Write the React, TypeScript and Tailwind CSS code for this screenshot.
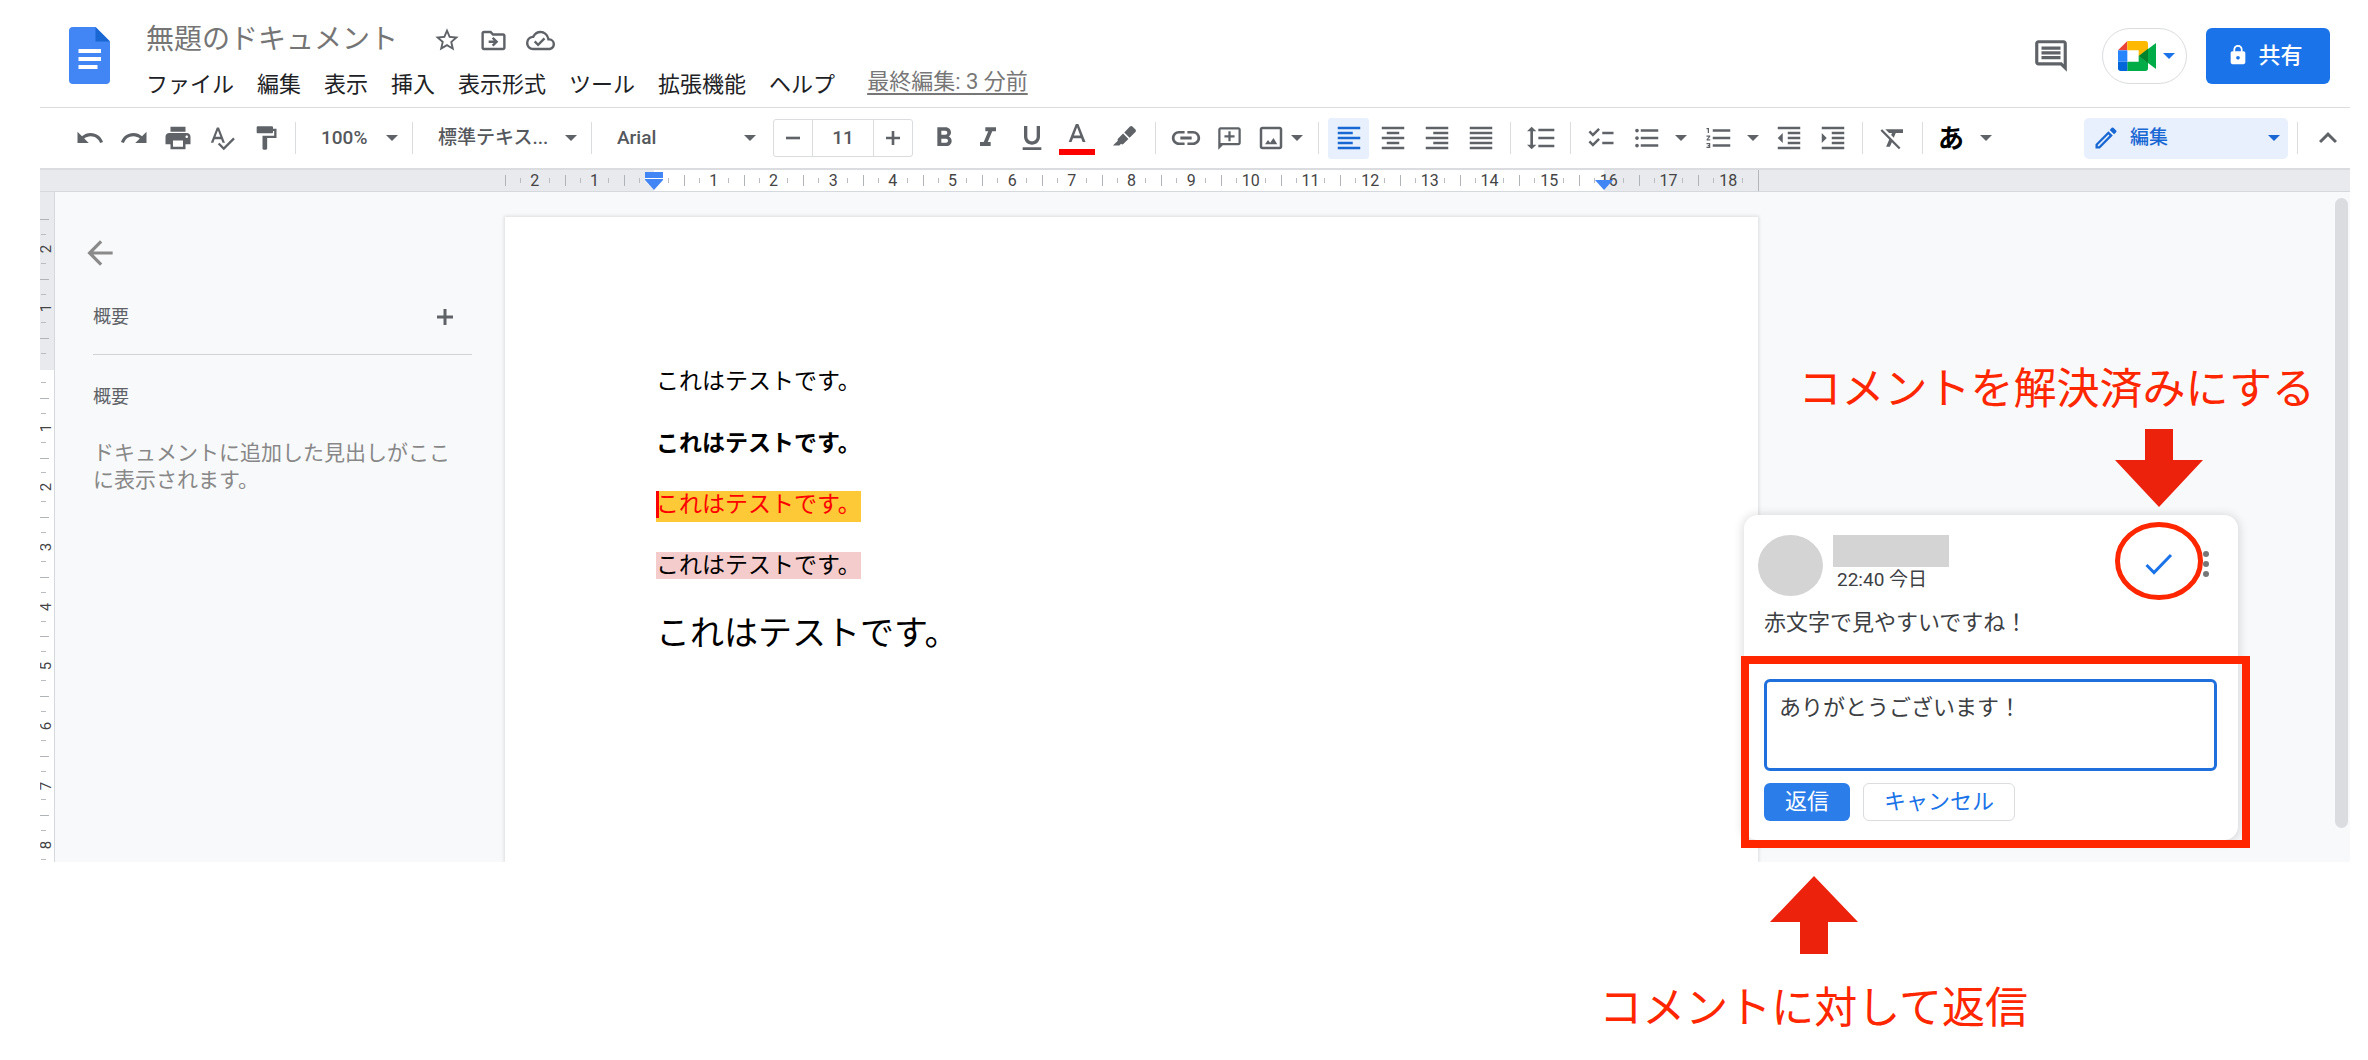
import React from "react";
import {
  MdUndo,
  MdRedo,
  MdPrint,
  MdSpellcheck,
  MdFormatPaint,
  MdFormatBold,
  MdFormatItalic,
  MdFormatUnderlined,
  MdLink,
  MdFormatAlignLeft,
  MdFormatAlignCenter,
  MdFormatAlignRight,
  MdFormatAlignJustify,
  MdFormatLineSpacing,
  MdChecklist,
  MdFormatListBulleted,
  MdFormatListNumbered,
  MdFormatIndentDecrease,
  MdFormatIndentIncrease,
  MdFormatClear,
  MdOutlineModeEdit,
  MdKeyboardArrowUp,
  MdStarBorder,
  MdOutlineDriveFileMove,
  MdOutlineCloudDone,
  MdOutlineComment,
  MdLock,
  MdArrowBack,
} from "react-icons/md";

function Caret({ className = "" }: { className?: string }) {
  return (
    <svg viewBox="0 0 12 6" className={`h-[6px] w-[12px] shrink-0 ${className}`} fill="currentColor" aria-hidden="true">
      <path d="M0 0h12L6 6z" />
    </svg>
  );
}

function PlusIcon({ className }: { className: string }) {
  return (
    <svg viewBox="0 0 16 16" className={className} fill="currentColor" aria-hidden="true">
      <path d="M6.500 0h3v6.500H16v3H9.500V16h-3V9.500H0v-3h6.500z" />
    </svg>
  );
}

function MinusIcon({ className }: { className: string }) {
  return (
    <svg viewBox="0 0 16 16" className={className} fill="currentColor" aria-hidden="true">
      <path d="M0 6.500h16v3H0z" />
    </svg>
  );
}

function DocsLogo() {
  return (
    <svg viewBox="0 0 41 57" className="h-[57px] w-[41px]" aria-hidden="true">
      <path d="M4 0h22.5L41 14.5V53a4 4 0 0 1-4 4H4a4 4 0 0 1-4-4V4a4 4 0 0 1 4-4z" fill="#4285f4" />
      <path d="M26.5 0L41 14.5H26.5z" fill="#1967d2" />
      <path d="M9.500 22H32v4H9.500zM9.500 30H32v4H9.500zM9.500 38H28.500v4H9.500z" fill="#fff" />
    </svg>
  );
}

function MeetLogo() {
  return (
    <svg viewBox="0 0 114 90" className="h-[30px] w-[38px]" aria-hidden="true">
      <path d="M0 28L28 0v28z" fill="#ea4335" />
      <path d="M28 0h54a8 8 0 0 1 8 8v18L62 46V28H28z" fill="#ffba00" />
      <path d="M28 90h54a8 8 0 0 0 8-8V66L62 44v18H28z" fill="#00ac47" />
      <path d="M90 24l24-18v78L90 66z" fill="#00ac47" />
      <path d="M62 45l28-22v44z" fill="#00832d" />
      <path d="M0 28h28v34H0z" fill="#2684fc" />
      <path d="M0 62h28v28H8a8 8 0 0 1-8-8z" fill="#0066da" />
    </svg>
  );
}

function AddCommentIcon() {
  return (
    <svg viewBox="0 0 24 24" className="size-[27px]" fill="currentColor" aria-hidden="true">
      <path d="M20 2H4c-1.100 0-2 .9-2 2v18l4-4h14c1.100 0 2-.9 2-2V4c0-1.100-.9-2-2-2zm0 14H4V4h16z" />
      <path d="M11 14.500h2V11h3.500V9H13V5.500h-2V9H7.500v2H11z" />
    </svg>
  );
}

function ImageIcon() {
  return (
    <svg viewBox="0 0 24 24" className="size-[30px]" fill="currentColor" aria-hidden="true">
      <path d="M19 5v14H5V5h14m0-2H5c-1.100 0-2 .9-2 2v14c0 1.100.9 2 2 2h14c1.100 0 2-.9 2-2V5c0-1.100-.9-2-2-2z" />
      <path d="M7.200 17l2.400-3.400 1.700 2.100 2.700-3.700L17 17z" />
    </svg>
  );
}

function TextColorIcon() {
  return (
    <svg viewBox="0 0 36 36" className="h-[36px] w-[36px]" aria-hidden="true">
      <path
        transform="translate(2.500 0) scale(1.300)"
        d="M11 3L5.500 17h2.250l1.120-3h6.250l1.120 3h2.250L13 3h-2zm-1.380 9L12 5.670 14.380 12H9.620z"
        fill="#5f6368"
      />
      <path d="M0 29h36v6H0z" fill="#f00" />
    </svg>
  );
}

function HighlighterIcon() {
  return (
    <svg viewBox="0 0 24 24" className="size-[28px]" fill="currentColor" aria-hidden="true">
      <path d="M12.200 7.200l4.900-5a1.500 1.500 0 0 1 2.100 0l2.600 2.600a1.500 1.500 0 0 1 0 2.100l-5 4.900z" />
      <path d="M11.200 8.200l4.600 4.600-4.200 4.200a1.500 1.500 0 0 1-2.100 0L8 18.500H2.500l4.200-4.200a1.500 1.500 0 0 1 .3-1.900z" />
    </svg>
  );
}

function Sep() {
  return <span className="mx-[9px] h-8 w-px shrink-0 bg-[#dadce0]" />;
}

function ToolButton({
  label,
  active = false,
  wide = false,
  children,
}: {
  label: string;
  active?: boolean;
  wide?: boolean;
  children: React.ReactNode;
}) {
  return (
    <button
      type="button"
      aria-label={label}
      aria-pressed={active}
      className={`flex h-[41px] shrink-0 items-center justify-center rounded-[3px] ${wide ? "w-[44px]" : "w-[41px]"} ${
        active ? "bg-[#e8f0fe] text-[#1967d2]" : ""
      }`}
    >
      {children}
    </button>
  );
}

function ToolSelect({ label, value, className }: { label: string; value: string; className: string }) {
  return (
    <span className={`relative flex h-[41px] shrink-0 items-center ${className}`}>
      <select
        aria-label={label}
        defaultValue={value}
        className="h-full w-full appearance-none bg-transparent pl-4 text-[19px] font-medium text-[#55585c]"
      >
        <option>{value}</option>
      </select>
      <Caret className="pointer-events-none absolute right-[5px]" />
    </span>
  );
}

const alignments = [
  { label: "左揃え", Icon: MdFormatAlignLeft },
  { label: "中央揃え", Icon: MdFormatAlignCenter },
  { label: "右揃え", Icon: MdFormatAlignRight },
  { label: "両端揃え", Icon: MdFormatAlignJustify },
];

function Toolbar() {
  return (
    <div className="flex h-[62px] items-center border-b-2 border-[#dadce0] pr-[2px] pl-[29px] text-[#5f6368]">
      <div className="flex gap-[3px]">
        <ToolButton label="元に戻す"><MdUndo size={30} /></ToolButton>
        <ToolButton label="やり直し"><MdRedo size={30} /></ToolButton>
        <ToolButton label="印刷"><MdPrint size={30} /></ToolButton>
        <ToolButton label="スペルチェック"><MdSpellcheck size={28} /></ToolButton>
        <ToolButton label="書式を貼り付け"><MdFormatPaint size={28} /></ToolButton>
      </div>
      <Sep />
      <ToolSelect label="ズーム" value="100%" className="w-[98px]" />
      <Sep />
      <ToolSelect label="スタイル" value="標準テキス..." className="w-[160px]" />
      <Sep />
      <ToolSelect label="フォント" value="Arial" className="w-[160px]" />
      <div className="mr-[10px] ml-3 flex h-[38px] w-[140px] shrink-0 rounded-[3px] border border-[#dadce0]">
        <button type="button" aria-label="フォントサイズを縮小" className="flex w-[38px] shrink-0 items-center justify-center">
          <MinusIcon className="size-[14px]" />
        </button>
        <input
          aria-label="フォントサイズ"
          defaultValue="11"
          className="min-w-0 flex-1 border-x border-[#dadce0] text-center text-[19px] font-medium text-[#55585c]"
        />
        <button type="button" aria-label="フォントサイズを拡大" className="flex w-[38px] shrink-0 items-center justify-center">
          <PlusIcon className="size-[14px]" />
        </button>
      </div>
      <div className="flex gap-[3px]">
        <ToolButton label="太字"><MdFormatBold size={32} /></ToolButton>
        <ToolButton label="斜体"><MdFormatItalic size={32} /></ToolButton>
        <ToolButton label="下線"><MdFormatUnderlined size={32} /></ToolButton>
        <ToolButton label="テキストの色" wide><TextColorIcon /></ToolButton>
        <ToolButton label="ハイライトの色" wide><HighlighterIcon /></ToolButton>
      </div>
      <Sep />
      <div className="flex gap-[3px]">
        <ToolButton label="リンクを挿入"><MdLink size={34} /></ToolButton>
        <ToolButton label="コメントを追加"><AddCommentIcon /></ToolButton>
        <button type="button" aria-label="画像を挿入" className="flex h-[41px] items-center gap-[5px] pr-[6px] pl-[3px]">
          <ImageIcon />
          <Caret />
        </button>
      </div>
      <Sep />
      <div className="flex gap-[3px]">
        {alignments.map(({ label, Icon }, i) => (
          <ToolButton key={label} label={label} active={i === 0}>
            <Icon size={30} />
          </ToolButton>
        ))}
      </div>
      <Sep />
      <ToolButton label="行間隔"><MdFormatLineSpacing size={32} /></ToolButton>
      <Sep />
      <div className="flex gap-[3px]">
        <ToolButton label="チェックリスト"><MdChecklist size={30} /></ToolButton>
        <button type="button" aria-label="箇条書き" className="flex h-[41px] items-center gap-[13px] pr-[6px] pl-2">
          <MdFormatListBulleted size={30} />
          <Caret />
        </button>
        <button type="button" aria-label="番号付きリスト" className="flex h-[41px] items-center gap-[13px] pr-[6px] pl-2">
          <MdFormatListNumbered size={30} />
          <Caret />
        </button>
        <ToolButton label="インデント減"><MdFormatIndentDecrease size={30} /></ToolButton>
        <ToolButton label="インデント増"><MdFormatIndentIncrease size={30} /></ToolButton>
      </div>
      <Sep />
      <ToolButton label="書式をクリア"><MdFormatClear size={30} /></ToolButton>
      <Sep />
      <button type="button" className="flex h-[41px] items-center gap-4 pl-[6px]">
        <span className="pt-[2px] text-[26px] leading-none font-bold text-black">あ</span>
        <Caret />
      </button>
      <span className="relative ml-auto flex h-[41px] w-[204px] shrink-0 items-center rounded-[5px] bg-[#e8f0fe] text-[#1967d2]">
        <MdOutlineModeEdit size={28} className="pointer-events-none absolute left-2" />
        <select
          aria-label="モード"
          defaultValue="編集"
          className="h-full w-full appearance-none bg-transparent pl-[46px] text-[19px] font-medium"
        >
          <option>編集</option>
        </select>
        <Caret className="pointer-events-none absolute right-2" />
      </span>
      <Sep />
      <ToolButton label="メニューを非表示"><MdKeyboardArrowUp size={36} /></ToolButton>
    </div>
  );
}

const menus = ["ファイル", "編集", "表示", "挿入", "表示形式", "ツール", "拡張機能", "ヘルプ"];

function Header() {
  return (
    <header className="flex items-start border-b border-[#dadce0] pr-5 pb-[7px] pl-[29px]">
      <a href="#home" aria-label="ドキュメント ホーム" className="mt-[27px]">
        <DocsLogo />
      </a>
      <div className="ml-9 pt-[22px]">
        <div className="flex h-9 items-center gap-[18px] text-[#5f6368]">
          <h1 className="mr-[17px] text-[28px] leading-9 text-[#757575]">無題のドキュメント</h1>
          <button type="button" aria-label="スター"><MdStarBorder size={28} /></button>
          <button type="button" aria-label="移動"><MdOutlineDriveFileMove size={29} /></button>
          <button type="button" aria-label="ドキュメントのステータス"><MdOutlineCloudDone size={29} /></button>
        </div>
        <nav className="mt-3 flex h-[30px] items-center gap-[23px] text-[22px] leading-[30px] text-[#202124]">
          {menus.map((m) => (
            <button key={m} type="button">{m}</button>
          ))}
          <a href="#history" className="ml-[9px] pb-[6px] text-[#777] underline underline-offset-4">
            最終編集: 3 分前
          </a>
        </nav>
      </div>
      <div className="mt-7 ml-auto flex h-14 items-center">
        <button type="button" aria-label="コメント履歴を開く" className="mr-8 text-[#5f6368]">
          <MdOutlineComment size={38} />
        </button>
        <button
          type="button"
          aria-label="ビデオ通話"
          className="mr-[19px] flex h-14 w-[85px] items-center justify-center gap-[7px] rounded-full border border-[#dadce0] pl-1 text-[#1a73e8]"
        >
          <MeetLogo />
          <Caret />
        </button>
        <button
          type="button"
          className="flex h-14 w-[124px] items-center justify-center gap-[9px] rounded-[6px] bg-[#1a73e8] pr-[6px] pb-[2px] text-[22px] font-medium text-white"
        >
          <MdLock size={22} />
          共有
        </button>
      </div>
    </header>
  );
}

const hLabels = ["2", "1", "", ...Array.from({ length: 18 }, (_, i) => String(i + 1))];
const vLabels = ["2", "1", "", "1", "2", "3", "4", "5", "6", "7", "8"];

function HorizontalRuler() {
  return (
    <div className="flex h-[22px] border-b border-[#d5d8dc] bg-[#e8eaed] pr-[591px] pl-[465px]">
      <div className="relative grid flex-1 grid-cols-[repeat(21,minmax(0,1fr))] border-r border-[#b4b7bb] bg-[linear-gradient(to_right,#e8eaed_0_11.900%,#fff_11.900%_87.700%,#e8eaed_87.700%)] text-[16px] text-[#444]">
        {hLabels.map((l, i) => (
          <div key={i} className="flex items-center">
            <span className="h-[11px] w-1/4 border-l border-[#b0b3b7]" />
            <span className="flex h-[5px] w-1/2 items-center justify-center border-x border-[#b9bcc0]">{l}</span>
          </div>
        ))}
        <svg viewBox="0 0 18 18" className="absolute top-[2px] left-[11.900%] h-[18px] w-[18px] -translate-x-1/2" aria-hidden="true">
          <path d="M0 0h18v9l-9 9-9-9z" fill="#fff" />
          <path d="M0 0h18v6H0zM0 7h18v1l-9 10-9-10z" fill="#4285f4" />
        </svg>
        <svg viewBox="0 0 18 10" className="absolute top-[10px] left-[87.700%] h-[10px] w-[18px] -translate-x-1/2" fill="#4285f4" aria-hidden="true">
          <path d="M0 0h18l-9 10z" />
        </svg>
      </div>
    </div>
  );
}

function VerticalRuler() {
  return (
    <div className="w-[15px] shrink-0 overflow-hidden border-r border-[#d5d8dc] bg-[linear-gradient(to_bottom,#e8eaed_0_178px,#fff_178px)] pt-[27px]">
      <div className="grid h-[656px] grid-rows-[repeat(11,minmax(0,1fr))] text-[15px] leading-3 text-[#444]">
        {vLabels.map((l, i) => (
          <div key={i} className="flex flex-col">
            <span className="h-1/4 w-[9px] border-t border-[#b0b3b7]" />
            <span className="ml-px flex h-1/2 w-[5px] items-center border-y border-[#b9bcc0]">
              <span className="ml-px -rotate-90">{l}</span>
            </span>
          </div>
        ))}
      </div>
    </div>
  );
}

function Outline() {
  return (
    <aside className="w-[450px] shrink-0 bg-[#f8f9fa] pt-[42px] pr-[33px] pl-[38px]">
      <button type="button" aria-label="ドキュメントの概要を閉じる" className="-ml-3 block text-[#8a8a8a]">
        <MdArrowBack size={38} />
      </button>
      <div className="mt-[31px] flex h-7 items-center justify-between pr-[19px] text-[#5f6368]">
        <h2 className="text-[18px] leading-7">概要</h2>
        <button type="button" aria-label="概要を追加">
          <PlusIcon className="size-4" />
        </button>
      </div>
      <hr className="mt-[23px] border-t-[1px] border-[#d0d3d6]" />
      <h2 className="mt-[28px] text-[18px] leading-7 text-[#5f6368]">概要</h2>
      <p className="mt-[29px] pr-5 text-[21px] leading-[27px] text-[#888]">ドキュメントに追加した見出しがここに表示されます。</p>
    </aside>
  );
}

const line = "これはテストです。";

function Page() {
  return (
    <main className="mt-[25px] flex min-w-0 flex-1 flex-col items-start bg-white pt-[150px] pl-[151px] text-[23px] leading-[30px] text-black shadow-[0_0_3px_1px_rgba(60,64,67,0.15)]">
      <p>{line}</p>
      <p className="mt-8 font-bold">{line}</p>
      <p className="mt-8 flex bg-[#fdc936] pb-1 leading-[27px] text-[#f00]">
        <span className="-mr-[3px] w-[3px] bg-[#f00]" />
        {line}
      </p>
      <p className="mt-[30px] bg-[#f4cccc] leading-[27px]">{line}</p>
      <p className="mt-[30px] text-[34px] leading-[48px]">{line}</p>
    </main>
  );
}

function CommentCard() {
  return (
    <section className="absolute top-[323px] right-[112px] w-[494px] rounded-[14px] bg-white pb-[19px] text-[#3c4043] shadow-[0_1px_8px_2px_rgba(60,64,67,0.16)]">
      <div className="flex items-start pt-5 pr-[22px] pl-[14px]">
        <span className="h-[61px] w-[65px] rounded-[50%] bg-[#d4d4d4]" />
        <div className="ml-[10px]">
          <span className="block h-8 w-[116px] bg-[#d4d4d4]" />
          <p className="pl-1 text-[19px] leading-[26px]">22:40 今日</p>
        </div>
        <div className="ml-auto flex gap-[15px]">
          <button type="button" aria-label="解決済みにする" className="relative flex h-[57px] w-11 items-center justify-center">
            <svg viewBox="0 0 28 22" className="h-[22px] w-[28px]" fill="none" stroke="#1a73e8" strokeWidth="3" aria-hidden="true">
              <path d="M1.500 12l7.500 7.500L26 2" />
            </svg>
            <svg viewBox="0 0 88 78" className="absolute -top-[13px] -left-[22px] h-[78px] w-[88px] max-w-none" fill="none" stroke="#ff2600" strokeWidth="5" aria-hidden="true">
              <ellipse cx="44" cy="39" rx="41.500" ry="36.500" />
            </svg>
          </button>
          <button type="button" aria-label="その他のオプション" className="flex h-[57px] w-5 items-center justify-center">
            <svg viewBox="0 0 6 26" className="h-[26px] w-[6px]" fill="#777" aria-hidden="true">
              <circle cx="3" cy="3" r="3" />
              <circle cx="3" cy="13" r="3" />
              <circle cx="3" cy="23" r="3" />
            </svg>
          </button>
        </div>
      </div>
      <p className="mt-3 pl-5 text-[22px] leading-[30px]">赤文字で見やすいですね！</p>
      <form className="relative mt-[41px] mr-[21px] ml-5" onSubmit={(e) => e.preventDefault()}>
        <textarea
          aria-label="返信"
          defaultValue="ありがとうございます！"
          className="block h-[92px] w-full resize-none rounded-[6px] border-[3px] border-[#1f6fdc] bg-white px-3 py-[11px] text-[22px] leading-[30px] outline-none"
        />
        <div className="mt-3 flex gap-[13px] text-[22px] leading-[30px]">
          <button type="submit" className="h-[38px] w-[86px] rounded-[6px] bg-[#2b7de9] text-white">返信</button>
          <button type="button" className="h-[38px] w-[152px] rounded-[6px] border border-[#dadce0] text-[#1a73e8]">
            キャンセル
          </button>
        </div>
        <span className="pointer-events-none absolute -top-[23px] -right-[33px] -bottom-[27px] -left-[23px] border-8 border-[#ff2600]" />
      </form>
    </section>
  );
}

export default function App() {
  return (
    <div className="min-h-screen bg-white pr-[18px] pl-10 font-[Roboto,'Noto_Sans_CJK_JP',sans-serif]">
      <Header />
      <Toolbar />
      <HorizontalRuler />
      <div className="relative">
        <div className="flex h-[670px] overflow-hidden bg-[#f8f9fa]">
          <VerticalRuler />
          <Outline />
          <Page />
          <div className="flex w-[592px] shrink-0 justify-end pt-[6px] pr-[2px]">
            <span className="h-[630px] w-[13px] rounded-full bg-[#dadce0]" />
          </div>
        </div>
        <div className="absolute top-[165px] right-[35px] flex flex-col items-end text-[#ff2600]">
          <p className="text-[43px] leading-[64px]">コメントを解決済みにする</p>
          <svg viewBox="0 0 88 78" className="mt-2 mr-[112px] h-[78px] w-[88px]" fill="#ed220d" aria-hidden="true">
            <path d="M30 0h28v31h30L44 78 0 31h30z" />
          </svg>
        </div>
        <CommentCard />
      </div>
      <div className="flex flex-col items-end pt-[14px] pr-[322px]">
        <div className="flex flex-col items-center text-[#ff2600]">
          <svg viewBox="0 0 88 78" className="h-[78px] w-[88px]" fill="#ed220d" aria-hidden="true">
            <path d="M44 0l44 46H58v32H30V46H0z" />
          </svg>
          <p className="mt-[22px] text-[43px] leading-[64px]">コメントに対して返信</p>
        </div>
      </div>
    </div>
  );
}
